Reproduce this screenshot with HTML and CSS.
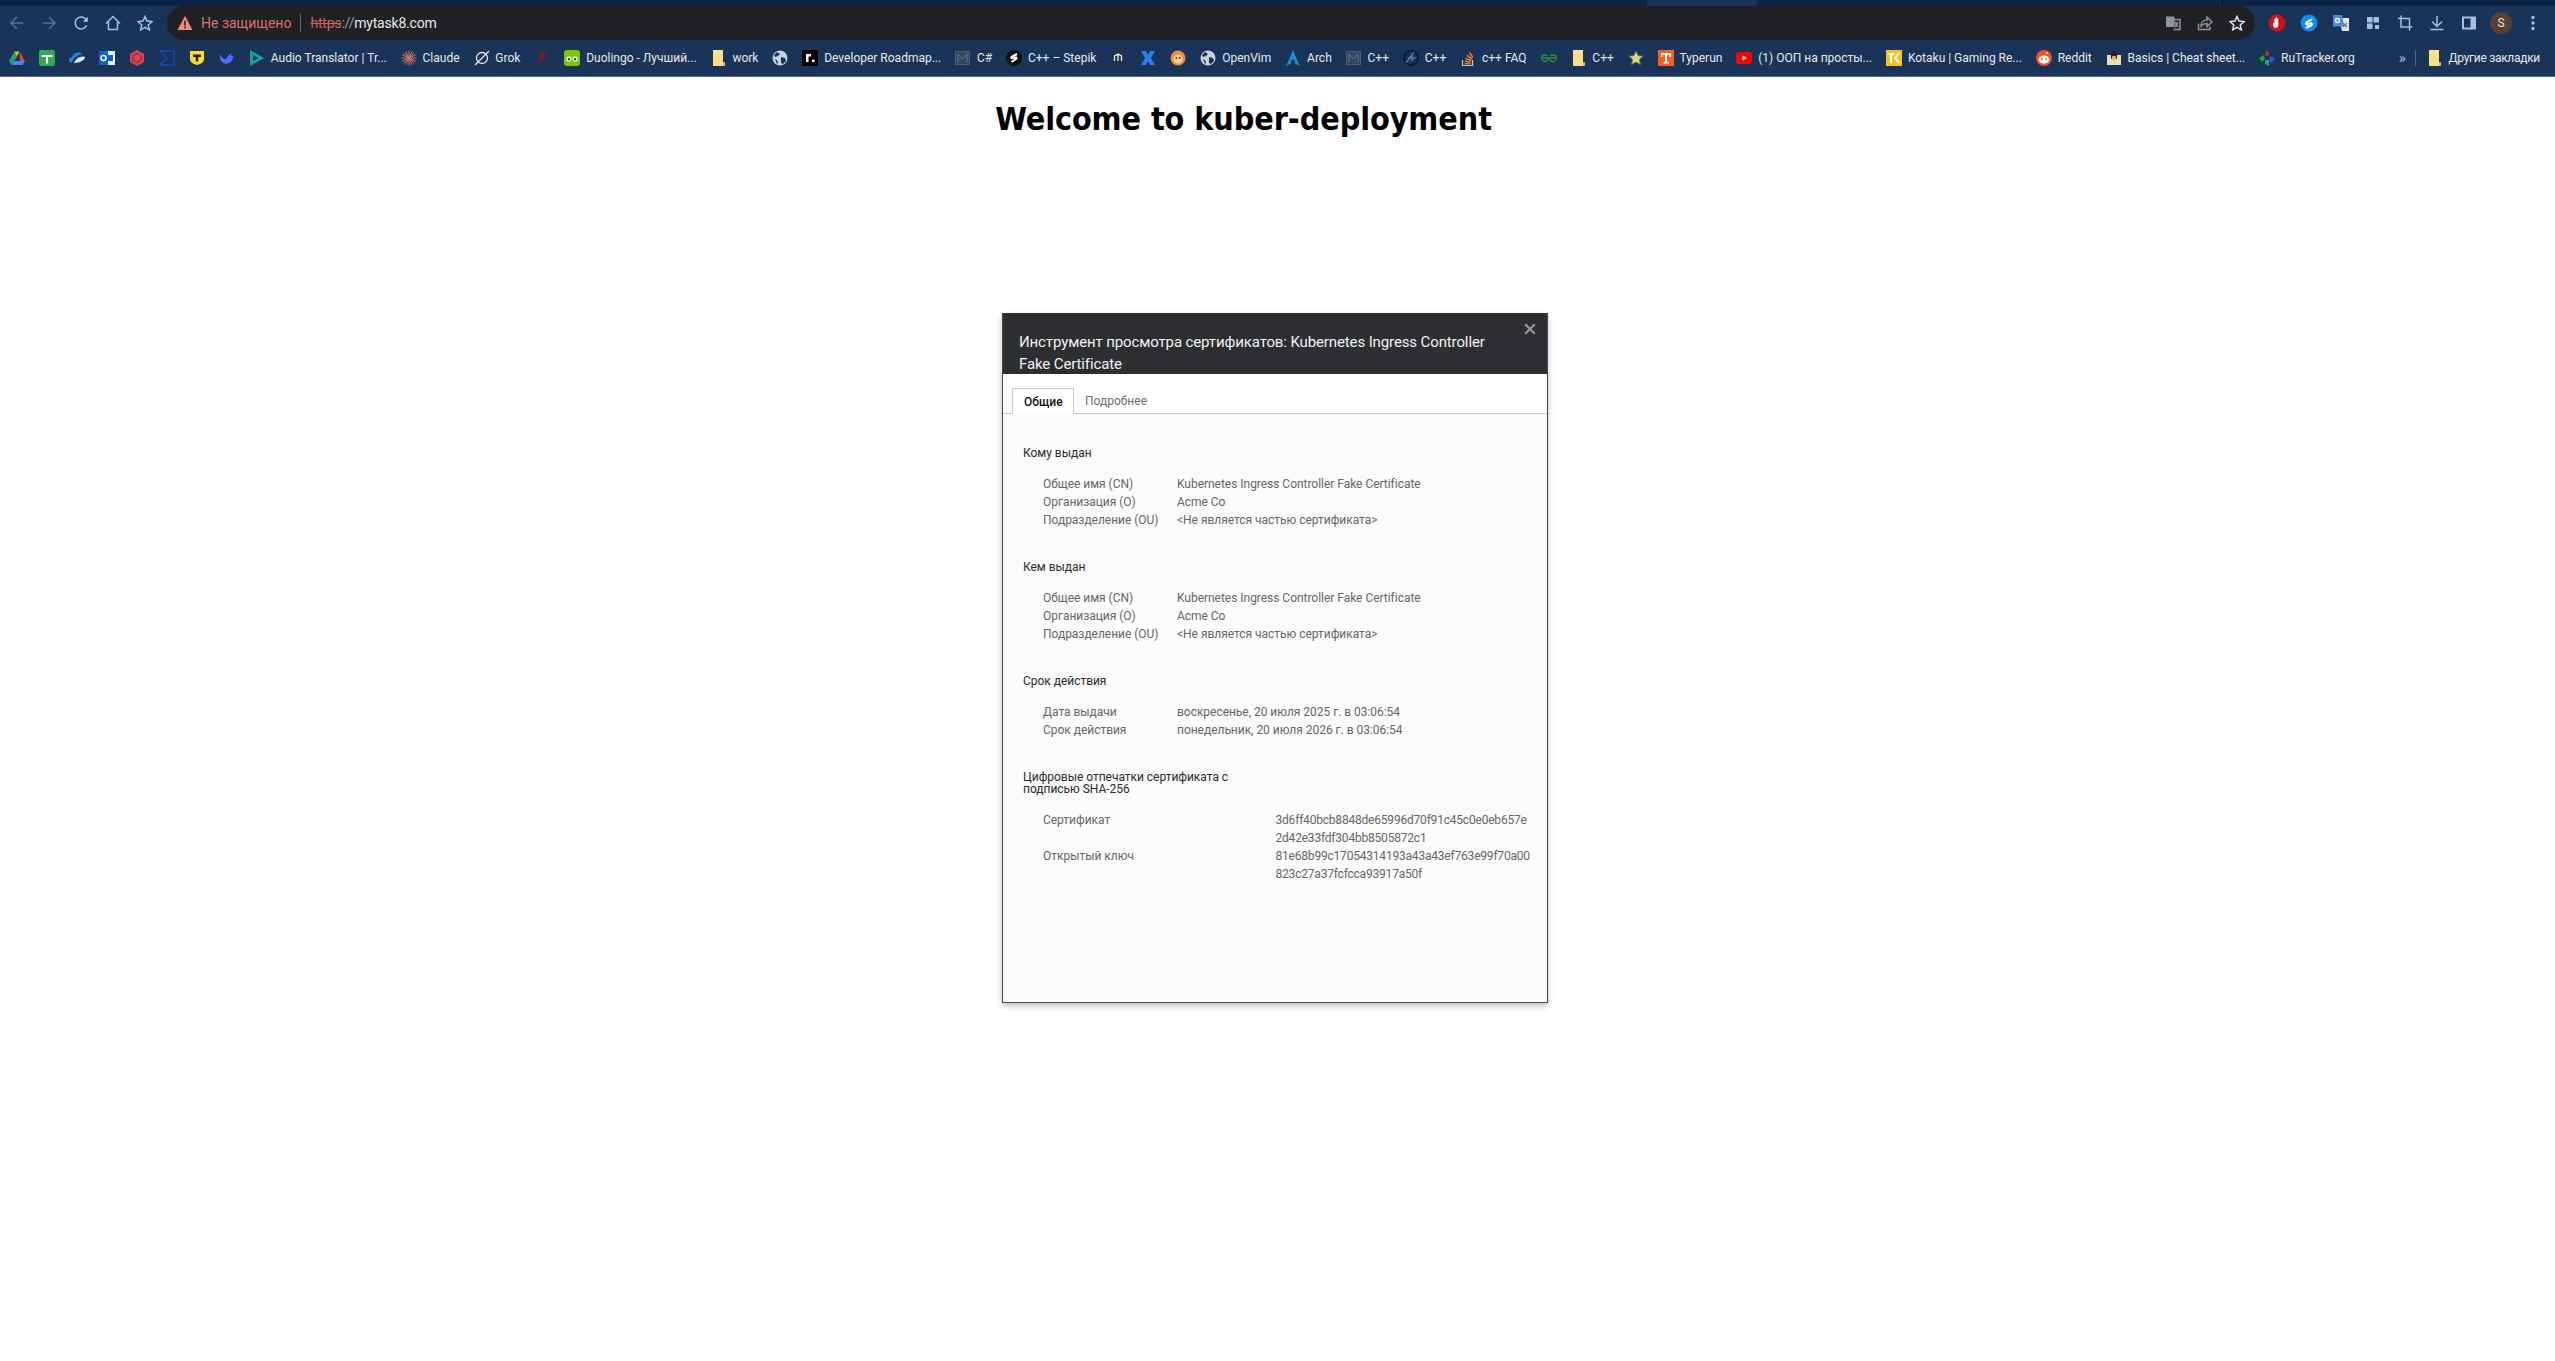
FILE: index.html
```html
<!DOCTYPE html>
<html lang="en">
<head>
  <meta charset="UTF-8" />
  <title>Welcome to kuber-deployment</title>
  <link rel="stylesheet" href="styles.css">
</head>
<body>
  <div class="tabstrip">
    <div class="strip-a"></div>
    <div class="strip-tab"></div>
    <div class="strip-b"></div>
    <div class="strip-c"></div>
  </div>

  <div class="toolbar">
    <button class="tool dim"><svg viewBox="0 0 16 16"><path d="M14.5 8H2M8 2 2 8l6 6"/></svg></button>
    <button class="tool dim"><svg viewBox="0 0 16 16"><path d="M1.5 8H14M8 2l6 6-6 6"/></svg></button>
    <button class="tool"><svg viewBox="0 0 16 16"><path d="M13.6 10.4A6 6 0 1 1 12.4 3.7L14 5.4"/><path class="solid" d="M14.8 1.8v5h-5z"/></svg></button>
    <button class="tool"><svg viewBox="0 0 16 16"><path d="M1 8.5 8 1.5l7 7M3.5 7v7.5h9V7"/></svg></button>
    <button class="tool"><svg viewBox="0 0 16 16"><path d="m8 1.5 2 4.6 5 .5-3.8 3.3 1.1 4.9L8 12.3l-4.3 2.5 1.1-4.9L1 6.6l5-.5z"/></svg></button>

    <div class="omnibox">
      <svg class="warn" viewBox="0 0 16 16"><path d="M8 1 15.5 15H.5z"/><rect x="7.2" y="5.5" width="1.6" height="5" fill="#202124"/><rect x="7.2" y="11.5" width="1.6" height="1.8" fill="#202124"/></svg>
      <span class="warn-text">Не защищено</span>
      <span class="omni-sep"></span>
      <span class="url"><s class="scheme">https</s><span class="slashes">://</span>mytask8.com</span>
      <div class="omni-right">
        <button class="tool gray"><svg viewBox="0 0 16 16"><rect class="solid" x="1" y="1.5" width="8.5" height="10.5"/><path d="M6.5 4.5H15v10H8.5"/><path d="m10 7 3 5M13 7l-3 5"/></svg></button>
        <button class="tool gray"><svg viewBox="0 0 16 16"><path d="M1.5 8.5v6H13v-3M4 11c0-4 3-6 6-6V2l5 5-5 4.5V8.500C7.500 8.500 5.500 9.500 4 11z"/></svg></button>
        <button class="tool bright"><svg viewBox="0 0 16 16"><path d="m8 1.5 2 4.6 5 .5-3.8 3.3 1.1 4.9L8 12.3l-4.3 2.5 1.1-4.9L1 6.6l5-.5z"/></svg></button>
      </div>
    </div>

    <button class="tool ext"><svg viewBox="0 0 18 18"><circle cx="9" cy="9" r="8.5" fill="#d01317"/><path fill="#fff" d="M6 13.500c-1-1.500-1-3-1-4.500s1.500.5 1.500.5V5c0-1 1.200-1 1.200 0V4c0-1 1.300-1 1.300 0v1c0-1 1.300-.8 1.300 0v6c0 1.500-1 2.800-2.500 2.800H6z"/></svg></button>
    <button class="tool ext"><svg viewBox="0 0 18 18"><circle cx="9" cy="9" r="8.5" fill="#0f8bf0"/><path fill="none" stroke="#fff" stroke-width="2" stroke-linecap="round" d="M11.500 5.500 7 8c-2 1.200-.5 3 1 2.300l2-1c1.500-.8 3 1 1 2.300l-4.500 2"/></svg></button>
    <button class="tool ext"><svg viewBox="0 0 18 18"><path fill="#dfe3e8" d="M7 4h10v13H10z"/><path fill="#4c86e8" d="M1 1h9l2 11.500H1z"/><circle cx="5.5" cy="6.5" r="2" fill="none" stroke="#fff"/><path d="m11 9 4 4M15 9l-4 4" stroke="#777" fill="none"/></svg></button>
    <button class="tool fill"><svg viewBox="0 0 16 16"><rect x="2" y="2" width="5.5" height="5.5"/><rect x="8.5" y="2" width="5.5" height="5.5"/><rect x="2" y="8.5" width="5.5" height="5.5"/><rect x="10" y="10" width="4" height="4"/></svg></button>
    <button class="tool"><svg viewBox="0 0 16 16"><path d="M4 .5V12h11.500M1 3.500h11.500V15.500"/></svg></button>
    <button class="tool"><svg viewBox="0 0 16 16"><path d="M8 1v10M3 6.500l5 5 5-5M1.500 14.500h13"/></svg></button>
    <button class="tool fill"><svg viewBox="0 0 16 16"><path fill-rule="evenodd" d="M1 1.500h14v13H1zM3 3.500v9h6.500v-9z"/></svg></button>
    <div class="avatar-wrap"><span class="avatar">S</span></div>
    <button class="tool fill"><svg viewBox="0 0 16 16"><circle cx="8" cy="2.5" r="1.7"/><circle cx="8" cy="8" r="1.7"/><circle cx="8" cy="13.5" r="1.7"/></svg></button>
  </div>

  <div class="bookmarks">
    <a class="bm"><svg viewBox="0 0 16 16"><path fill="#fbbc04" d="M5.500 1.500h5L8 6 5.500 10.500z"/><path fill="#1ea362" d="M5.500 1.500 0 11l2.500 4L8 6z"/><path fill="#ea4335" d="M10.500 1.500 16 11h-5z"/><path fill="#4285f4" d="M2.500 15h11l2.500-4H5z"/></svg></a>
    <a class="bm"><svg viewBox="0 0 16 16"><rect width="16" height="16" rx="2" fill="#34a853"/><path fill="#fff" d="M2.500 5h11v2h-4.500v6.500H7V7H2.500z"/></svg></a>
    <a class="bm"><svg viewBox="0 0 16 16"><path fill="#1a83f0" d="M0 11c0-3 2-3.500 3-4 1-3 5-5.500 8.500-4 1 .5 1.500 1 2 1.500-5 0-9 3-10.500 8H2c-1 0-2-.5-2-1.500z"/><path fill="#dfeaf7" d="M5 13c1.500-4 5-7 10.500-6.500.5 1 .5 2-.5 3-3 2.500-6 3.500-10 3.500z"/></svg></a>
    <a class="bm"><svg viewBox="0 0 16 16"><rect x="5" y="1" width="11" height="14" fill="#e8f1fb"/><rect x="7" y="5" width="7" height="6" fill="#0a66c0"/><rect width="9" height="14" y="1" fill="#0a66c0"/><circle cx="4.5" cy="8" r="2.500" fill="none" stroke="#fff" stroke-width="1.5"/></svg></a>
    <a class="bm"><svg viewBox="0 0 16 16"><path fill="#d8474f" d="M8 0l7 4v8l-7 4-7-4V4z"/><circle cx="8" cy="8" r="4.3" fill="none" stroke="#7c2a3a" stroke-width="1.5" stroke-dasharray="2 1"/></svg></a>
    <a class="bm"><svg viewBox="0 0 16 16"><path fill="none" stroke="#1348b8" stroke-width="1.5" d="M1 1h14v14H1l6.500-7z"/></svg></a>
    <a class="bm"><svg viewBox="0 0 16 16"><path fill="#fddd2e" d="M1 1h14v8c0 3-3 5-7 6-4-1-7-3-7-6z"/><path fill="#222" d="M4 4.500h8V7H9.300v4.500H6.700V7H4z"/></svg></a>
    <a class="bm"><svg viewBox="0 0 16 16"><path fill="#4d6bfe" d="M1 4c1.500 4 4 5 6 5 1 0 1-2 2-3 1-1.500 3-2 4-2l-1 2c2 0 2.500 1 3 1-1 0-1 2-2.500 4-2 3-7 4-9.500 1C1 10 .5 7 1 4z"/></svg></a>
    <a class="bm"><svg viewBox="0 0 16 16"><path fill="#12a594" d="M1 0l14 8-14 8z"/><path fill="#1a3358" d="M4 5l5.500 3L4 11z"/></svg><span>Audio Translator | Tr...</span></a>
    <a class="bm"><svg viewBox="0 0 16 16"><path stroke="#d97757" stroke-width="1" stroke-linecap="round" d="M8 1v14M1 8h14M3 3l10 10M13 3 3 13M5 1.500l6 13M11 1.500l-6 13M1.500 5l13 6M14.500 5l-13 6"/></svg><span>Claude</span></a>
    <a class="bm"><svg viewBox="0 0 16 16"><circle cx="8" cy="8" r="5.5" fill="none" stroke="#e8e8e8" stroke-width="1.3"/><path stroke="#e8e8e8" stroke-width="1.3" d="M1 15 15 1"/></svg><span>Grok</span></a>
    <a class="bm"><svg viewBox="0 0 16 16"><path fill="#7c1a2a" d="M6 2h7l-1 3H8.500L8 7h3l-1 2.500H7.500L6 14H4.500z"/></svg></a>
    <a class="bm"><svg viewBox="0 0 16 16"><rect width="16" height="16" rx="3" fill="#78c800"/><circle cx="4.8" cy="9" r="2.6" fill="#fff"/><circle cx="11.2" cy="9" r="2.6" fill="#fff"/><circle cx="5" cy="9.3" r="1.2" fill="#234"/><circle cx="11" cy="9.3" r="1.2" fill="#234"/></svg><span>Duolingo - Лучший...</span></a>
    <a class="bm"><svg viewBox="0 0 16 16"><path fill="#fbe08a" d="M2 0h10v16H2z"/><path fill="#e3b95a" d="M12 12h2v4h-2z"/></svg><span>work</span></a>
    <a class="bm"><svg viewBox="0 0 16 16"><circle cx="8" cy="8" r="7.5" fill="#c9d3e0"/><path fill="#1a3358" d="M5 2 8 4 6 6 3 7 2 5zM9 7l4 1 1 3-3 3-2-1zM3 9l2 1 1 3-1 1z"/></svg></a>
    <a class="bm"><svg viewBox="0 0 16 16"><rect width="16" height="16" rx="1" fill="#000"/><path fill="#fff" d="M4 4h5v2.500H6.500V12H4z"/><rect x="10" y="9.5" width="2.5" height="2.5" fill="#fff"/></svg><span>Developer Roadmap...</span></a>
    <a class="bm"><svg viewBox="0 0 16 16"><rect x=".5" y="1.5" width="14" height="13" fill="#33465f" stroke="#4a5d76"/><path fill="none" stroke="#66788f" d="M3 12V4l4.500 5L12 4v8"/></svg><span>C#</span></a>
    <a class="bm"><svg viewBox="0 0 16 16"><circle cx="8" cy="8" r="8" fill="#111"/><path fill="none" stroke="#fff" stroke-width="2" d="M11 4 6 6.500c-1.500 1-.5 2 .5 1.500l3-.5c1-.5 1.500 1 .5 1.500L5.500 12"/></svg><span>C++ – Stepik</span></a>
    <a class="bm"><svg viewBox="0 0 16 16"><circle cx="8" cy="8" r="7.5" fill="#22324a"/><path fill="none" stroke="#e8e8e8" stroke-width="1.3" d="M4.500 11V6l3.500-2 3.500 2v5M8 4v7"/></svg></a>
    <a class="bm"><svg viewBox="0 0 16 16"><path fill="#2f7df0" d="M1 1h5l2 4 2-4h5l-4 7 4 7h-5L8 11l-2 4H1l4-7z"/></svg></a>
    <a class="bm"><svg viewBox="0 0 16 16"><circle cx="8" cy="8" r="7.5" fill="#e8903a"/><circle cx="8" cy="9" r="4.5" fill="#f7d188"/><circle cx="6.3" cy="8" r=".9" fill="#432"/><circle cx="9.7" cy="8" r=".9" fill="#432"/></svg></a>
    <a class="bm"><svg viewBox="0 0 16 16"><circle cx="8" cy="8" r="7.5" fill="#c9d3e0"/><path fill="#1a3358" d="M5 2 8 4 6 6 3 7 2 5zM9 7l4 1 1 3-3 3-2-1zM3 9l2 1 1 3-1 1z"/></svg><span>OpenVim</span></a>
    <a class="bm"><svg viewBox="0 0 16 16"><path fill="#1793d1" d="M8 0c1 3 4 10 7 16-2-1-4-2-5-2.500 0-3-.5-4-2-4s-2 1-2 4C5 14 3 15 1 16 4 10 7 3 8 0z"/></svg><span>Arch</span></a>
    <a class="bm"><svg viewBox="0 0 16 16"><rect x=".5" y="1.5" width="14" height="13" fill="#33465f" stroke="#4a5d76"/><path fill="none" stroke="#66788f" d="M3 12V4l4.500 5L12 4v8"/></svg><span>C++</span></a>
    <a class="bm"><svg viewBox="0 0 16 16"><circle cx="8" cy="8" r="7" fill="none" stroke="#0b1a30" stroke-width="1.8"/><path stroke="#6d86a8" stroke-width="1.2" fill="none" d="M5 8h8M9 5v6M11 2 3 13"/></svg><span>C++</span></a>
    <a class="bm"><svg viewBox="0 0 16 16"><path fill="none" stroke="#c7c7c7" stroke-width="1.2" d="M2.500 10v5.500h10V10"/><path stroke="#e8792e" stroke-width="1.6" d="M4.500 13.800h6M4.700 11.300l6 .7M5.500 8.500l5.800 2M7 5.500l5 3.500M9.500 2.500l3.500 5"/></svg><span>c++ FAQ</span></a>
    <a class="bm"><svg viewBox="0 0 16 16"><path fill="none" stroke="#2f8d46" stroke-width="1.3" d="M0 8h16M7.500 8c0 2-2 3.500-3.500 3.500S.8 10 .8 8 2.500 5 4 5c1 0 2 .5 2.500 1M8.500 8c0 2 2 3.500 3.500 3.500S15.200 10 15.200 8 13.500 5 12 5c-1 0-2 .5-2.500 1"/></svg></a>
    <a class="bm"><svg viewBox="0 0 16 16"><path fill="#fbe08a" d="M2 0h10v16H2z"/><path fill="#e3b95a" d="M12 12h2v4h-2z"/></svg><span>C++</span></a>
    <a class="bm"><svg viewBox="0 0 16 16"><path fill="#d8d88a" stroke="#5c6a30" d="m8 1 2.200 4.600 5 .6-3.700 3.400 1 5L8 12.200l-4.500 2.400 1-5L.8 6.200l5-.6z"/></svg></a>
    <a class="bm"><svg viewBox="0 0 16 16"><rect width="16" height="16" fill="#f4611f"/><path fill="#fff" d="M3 3h10v4h-1.500V5H9v7h1.500v1.500h-5V12H7V5H4.500v2H3z"/></svg><span>Typerun</span></a>
    <a class="bm"><svg viewBox="0 0 16 16"><rect y="2" width="16" height="12" rx="3.5" fill="#f00"/><path fill="#fff" d="m6.500 5.500 4.500 2.500-4.500 2.500z"/></svg><span>(1) ООП на просты...</span></a>
    <a class="bm"><svg viewBox="0 0 16 16"><rect width="16" height="16" fill="#f9c11f"/><path fill="none" stroke="#fff" stroke-width="2" d="M2 4h6M5 4v9M13 3 9 8l4 5"/></svg><span>Kotaku | Gaming Re...</span></a>
    <a class="bm"><svg viewBox="0 0 16 16"><circle cx="8" cy="8" r="8" fill="#f4511e"/><ellipse cx="8" cy="9.5" rx="5.5" ry="4" fill="#fff"/><circle cx="6" cy="9" r="1" fill="#f4511e"/><circle cx="10" cy="9" r="1" fill="#f4511e"/><circle cx="11" cy="3" r="1" fill="#fff"/></svg><span>Reddit</span></a>
    <a class="bm"><svg viewBox="0 0 16 16"><rect x="1" y="5" width="14" height="10" fill="#e9dfb8"/><path fill="#222" d="M5 4c0-4 6-4 6 0v5H5z"/><circle cx="8" cy="8" r="2.3" fill="#e9b94a"/></svg><span>Basics | Cheat sheet...</span></a>
    <a class="bm"><svg viewBox="0 0 16 16"><path fill="#c0392b" d="m8 0 2 3-1 3-3-1z"/><path fill="#2ca02c" d="m0 8 5-3 1 4-3 3z"/><path fill="#2a57c9" d="m16 8-5-2-1 4 2 4z"/><path fill="#2f9e8f" d="m6 10 4 0 0 6-4-2z"/></svg><span>RuTracker.org</span></a>
    <span class="bm-more">»</span>
    <span class="bm-sep"></span>
    <a class="bm bm-other"><svg viewBox="0 0 16 16"><path fill="#fbe08a" d="M2 0h10v16H2z"/><path fill="#e3b95a" d="M12 12h2v4h-2z"/></svg><span>Другие закладки</span></a>
  </div>

  <div class="page">
    <h1>Welcome to kuber-deployment</h1>
  </div>

  <div class="dialog">
    <div class="dialog-title">
      Инструмент просмотра сертификатов: Kubernetes Ingress Controller Fake Certificate
      <button class="dialog-close"><svg viewBox="0 0 10 10"><path d="M1 1l8 8M9 1 1 9"/></svg></button>
    </div>
    <div class="tabs">
      <span class="tab active">Общие</span>
      <span class="tab">Подробнее</span>
    </div>
    <div class="cert">
      <h3>Кому выдан</h3>
      <dl class="rows">
        <dt>Общее имя (CN)</dt><dd>Kubernetes Ingress Controller Fake Certificate</dd>
        <dt>Организация (O)</dt><dd>Acme Co</dd>
        <dt>Подразделение (OU)</dt><dd>&lt;Не является частью сертификата&gt;</dd>
      </dl>
      <h3>Кем выдан</h3>
      <dl class="rows">
        <dt>Общее имя (CN)</dt><dd>Kubernetes Ingress Controller Fake Certificate</dd>
        <dt>Организация (O)</dt><dd>Acme Co</dd>
        <dt>Подразделение (OU)</dt><dd>&lt;Не является частью сертификата&gt;</dd>
      </dl>
      <h3>Срок действия</h3>
      <dl class="rows">
        <dt>Дата выдачи</dt><dd>воскресенье, 20 июля 2025 г. в 03:06:54</dd>
        <dt>Срок действия</dt><dd>понедельник, 20 июля 2026 г. в 03:06:54</dd>
      </dl>
      <h3 class="narrow">Цифровые отпечатки сертификата с подписью SHA-256</h3>
      <dl class="rows hashes">
        <dt>Сертификат</dt><dd>3d6ff40bcb8848de65996d70f91c45c0e0eb657e<br>2d42e33fdf304bb8505872c1</dd>
        <dt>Открытый ключ</dt><dd>81e68b99c17054314193a43a43ef763e99f70a00<br>823c27a37fcfcca93917a50f</dd>
      </dl>
    </div>
  </div>
</body>
</html>
```

FILE: styles.css
```css
* {
  box-sizing: border-box;
}

body {
  margin: 0;
  height: 1361px;
  overflow: hidden;
  background: #fff;
  font-family: Roboto, "Noto Sans", sans-serif;
  position: relative;
}

/* browser chrome */
.tabstrip {
  display: flex;
  height: 6px;
  background: #0e2444;
}

.strip-a {
  width: 1647px;
}

.strip-tab {
  width: 110px;
  background: #1a3358;
}

.strip-b {
  width: 465px;
}

.strip-c {
  flex: 1;
  border-left: 1px solid #050e1c;
}

.toolbar {
  display: flex;
  align-items: center;
  height: 34px;
  padding: 0 6px 0 1px;
  background: #1a3358;
}

.tool {
  flex: none;
  width: 32px;
  height: 32px;
  padding: 0;
  border: none;
  background: none;
  display: flex;
  align-items: center;
  justify-content: center;
}

.tool svg {
  width: 16px;
  height: 16px;
  fill: none;
  stroke: #a9bfdd;
  stroke-width: 1.5;
}

.tool .solid {
  fill: #a9bfdd;
  stroke: none;
}

.tool.dim svg {
  stroke: #566f92;
}

.tool.gray svg {
  stroke: #8f9499;
}

.tool.gray .solid {
  fill: #8f9499;
}

.tool.bright svg {
  stroke: #dfe1e5;
}

.tool.fill svg {
  fill: #a9bfdd;
  stroke: none;
}

.tool.ext svg {
  width: 18px;
  height: 18px;
  stroke: none;
}

.omnibox {
  flex: 1;
  height: 34px;
  margin: 0 6px;
  padding-left: 10px;
  display: flex;
  align-items: center;
  background: #202124;
  border-radius: 17px;
  font-size: 14px;
  white-space: nowrap;
}

.warn {
  width: 16px;
  height: 16px;
  fill: #ee8a80;
}

.warn-text {
  margin-left: 8px;
  color: #d9736a;
}

.omni-sep {
  width: 1px;
  height: 18px;
  margin: 0 9px;
  background: #5f6368;
}

.url {
  color: #e8eaed;
  letter-spacing: -0.2px;
}

.scheme {
  color: #c9635c;
}

.slashes {
  color: #9aa0a6;
}

.omni-right {
  display: flex;
  margin-left: auto;
  padding-right: 2px;
}

.avatar-wrap {
  flex: none;
  width: 32px;
  display: flex;
  justify-content: center;
}

.avatar {
  width: 22px;
  height: 22px;
  border-radius: 50%;
  background: #5b3f33;
  color: #f0e6e0;
  font-size: 12px;
  line-height: 22px;
  text-align: center;
}

.bookmarks {
  display: flex;
  align-items: center;
  height: 37px;
  padding: 0 8px 0 2px;
  background: #1a3358;
  border-bottom: 1px solid #52688a;
  font-size: 12px;
  white-space: nowrap;
  color: #e8eaed;
}

.bm {
  flex: none;
  display: flex;
  align-items: center;
  gap: 5.8px;
  padding: 0 7px;
}

.bm svg {
  flex: none;
  width: 16px;
  height: 16px;
}

.bm-other span {
  letter-spacing: -0.3px;
}

.bm-more {
  margin-left: auto;
  margin-right: 9px;
  font-size: 15px;
  color: #a9bfdd;
}

.bm-sep {
  width: 1px;
  height: 16px;
  margin-right: 4px;
  background: #52688a;
}

/* page */
.page {
  padding-right: 68px;
}

h1 {
  margin: 0;
  padding-top: 22px;
  text-align: center;
  font-family: "DejaVu Sans", Verdana, sans-serif;
  font-stretch: condensed;
  font-size: 32px;
  line-height: 40px;
  font-weight: 700;
  letter-spacing: -0.08px;
  color: #000;
}

/* certificate dialog, floats over the page */
.dialog {
  position: absolute;
  left: 1002px;
  top: 313px;
  width: 546px;
  height: 690px;
  background: #fbfbfb;
  border: 1px solid #4a4a4a;
  border-top: none;
  box-shadow: 0 3px 6px rgba(0, 0, 0, 0.25);
  display: flex;
  flex-direction: column;
}

.dialog-title {
  position: relative;
  flex: none;
  height: 61px;
  padding: 18px 50px 0 16px;
  overflow: hidden;
  background: #2c2e32;
  color: #f2f2f2;
  font-size: 15px;
  letter-spacing: -0.12px;
  line-height: 22px;
}

.dialog-close {
  position: absolute;
  top: 10px;
  right: 11px;
  width: 12px;
  height: 12px;
  padding: 0;
  border: none;
  background: none;
}

.dialog-close svg {
  display: block;
  fill: none;
  stroke: #9a9a9a;
  stroke-width: 1.8;
}

.tabs {
  flex: none;
  display: flex;
  height: 40px;
  padding: 14px 0 0 9px;
  background: #fff;
  border-bottom: 1px solid #c8c8c8;
  font-size: 12px;
}

.tab {
  height: 26px;
  padding: 0 11px;
  line-height: 27px;
  color: #6e6e6e;
}

.tab.active {
  width: 62px;
  background: #fff;
  height: 26px;
  border: 1px solid #c8c8c8;
  border-bottom: none;
  color: #111;
  font-weight: 500;
}

.cert {
  padding: 33px 16px 0 20px;
  font-size: 12px;
  letter-spacing: -0.03px;
}

h3 {
  margin: 0 0 16px;
  font-size: 12px;
  line-height: 12px;
  font-weight: 400;
  color: #2a2a2a;
}

h3.narrow {
  max-width: 232px;
}

.rows {
  display: grid;
  grid-template-columns: 134px 1fr;
  margin: 0 0 32px;
  padding-left: 20px;
  line-height: 18px;
  color: #666;
}

.rows dt,
.rows dd {
  margin: 0;
}

.rows.hashes {
  grid-template-columns: 232.5px 1fr;
}

.rows.hashes dd {
  letter-spacing: -0.2px;
  white-space: nowrap;
}
```
